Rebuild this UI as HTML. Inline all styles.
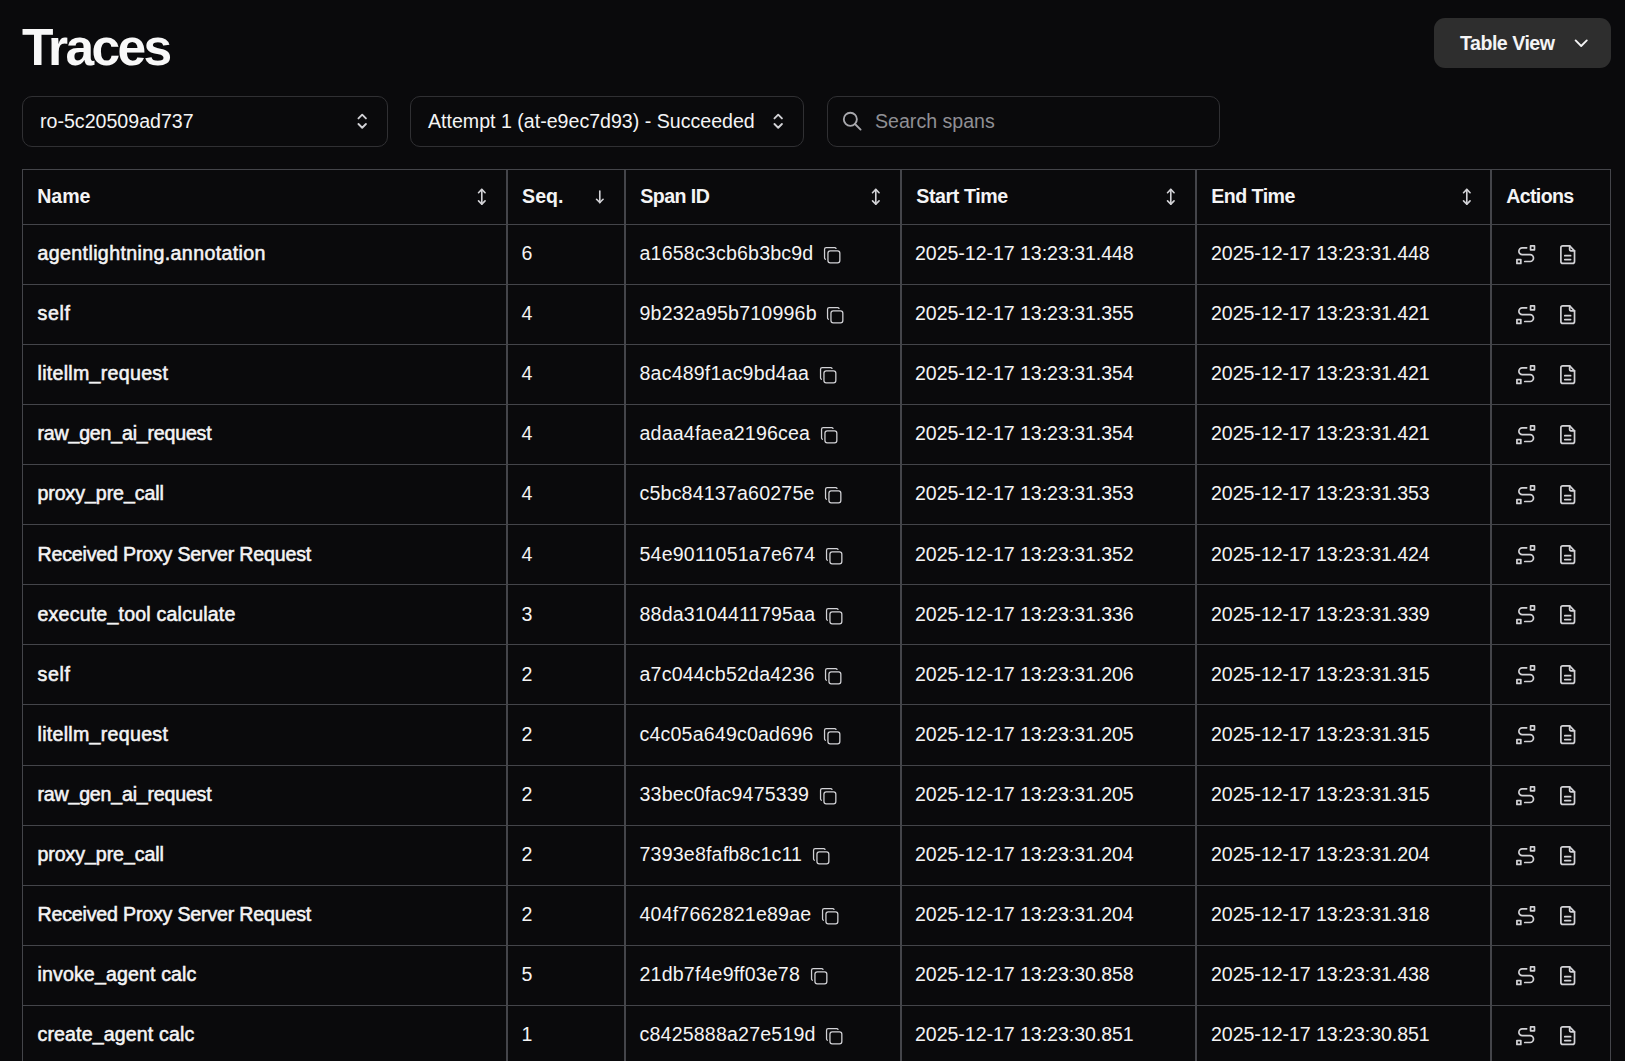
<!DOCTYPE html>
<html><head><meta charset="utf-8"><title>Traces</title>
<style>
html,body{margin:0;padding:0;}
body{width:1625px;height:1061px;overflow:hidden;background:#0a0a0c;position:relative;font-family:"Liberation Sans",sans-serif;color:#f4f4f5;}
.t{position:absolute;white-space:nowrap;font-size:19.6px;line-height:20px;}
.b{font-weight:700;}
.us{position:relative;top:-1.5px;}
.m{-webkit-text-stroke:0.55px #f4f4f5;}
.ic{position:absolute;width:22.4px;height:22.4px;}
.cp{position:absolute;width:20.4px;height:20.4px;}
.box{position:absolute;box-sizing:border-box;border:1px solid #303033;border-radius:10px;}
.hl{position:absolute;height:1px;background:#44454a;}
.vl{position:absolute;width:1px;background:#44454a;}
</style></head><body>

<div class="t b" style="left:22px;top:19px;font-size:51.5px;line-height:56px;letter-spacing:-2.6px;color:#f8f8f8">Traces</div>
<div style="position:absolute;left:1434px;top:18px;width:177px;height:50px;border-radius:11px;background:#2e2e2e"></div>
<div class="t b" style="left:1460px;top:33px;letter-spacing:-0.5px">Table View</div>
<svg class="ic" style="left:1570px;top:32px" viewBox="0 0 24 24" fill="none" stroke="#f4f4f5" stroke-width="2" stroke-linecap="round" stroke-linejoin="round"><path d="M6 9l6 6l6-6"/></svg>
<div class="box" style="left:22px;top:96px;width:366px;height:51px"></div>
<div class="t" style="left:40px;top:111px">ro-5c20509ad737</div>
<svg class="ic" style="left:351.4px;top:110.3px" viewBox="0 0 24 24" fill="none" stroke="#d2d2d6" stroke-width="2" stroke-linecap="round" stroke-linejoin="round"><path d="M8 9l4-4l4 4"/><path d="M16 15l-4 4l-4-4"/></svg>
<div class="box" style="left:410px;top:96px;width:394px;height:51px"></div>
<div class="t" style="left:428px;top:111px">Attempt 1 (at-e9ec7d93) - Succeeded</div>
<svg class="ic" style="left:767.4px;top:110.3px" viewBox="0 0 24 24" fill="none" stroke="#d2d2d6" stroke-width="2" stroke-linecap="round" stroke-linejoin="round"><path d="M8 9l4-4l4 4"/><path d="M16 15l-4 4l-4-4"/></svg>
<div class="box" style="left:827px;top:96px;width:393px;height:51px"></div>
<svg class="ic" style="left:841.2px;top:110.4px" viewBox="0 0 24 24" fill="none" stroke="#a8a8ad" stroke-width="2" stroke-linecap="round" stroke-linejoin="round"><path d="M3 10a7 7 0 1 0 14 0a7 7 0 1 0-14 0"/><path d="M21 21l-6-6"/></svg>
<div class="t" style="left:875px;top:111px;color:#8f8f94">Search spans</div>
<div class="hl" style="left:22px;width:1589px;top:169px"></div>
<div class="hl" style="left:22px;width:1589px;top:224px"></div>
<div class="hl" style="left:22px;width:1589px;top:284px"></div>
<div class="hl" style="left:22px;width:1589px;top:344px"></div>
<div class="hl" style="left:22px;width:1589px;top:404px"></div>
<div class="hl" style="left:22px;width:1589px;top:464px"></div>
<div class="hl" style="left:22px;width:1589px;top:524px"></div>
<div class="hl" style="left:22px;width:1589px;top:584px"></div>
<div class="hl" style="left:22px;width:1589px;top:644px"></div>
<div class="hl" style="left:22px;width:1589px;top:704px"></div>
<div class="hl" style="left:22px;width:1589px;top:765px"></div>
<div class="hl" style="left:22px;width:1589px;top:825px"></div>
<div class="hl" style="left:22px;width:1589px;top:885px"></div>
<div class="hl" style="left:22px;width:1589px;top:945px"></div>
<div class="hl" style="left:22px;width:1589px;top:1005px"></div>
<div class="vl" style="left:22px;top:169px;height:892px"></div>
<div class="vl" style="left:1610px;top:169px;height:892px"></div>
<div class="vl" style="left:506px;top:169px;height:892px;width:2px"></div>
<div class="vl" style="left:624px;top:169px;height:892px;width:2px"></div>
<div class="vl" style="left:900px;top:169px;height:892px;width:2px"></div>
<div class="vl" style="left:1195px;top:169px;height:892px;width:2px"></div>
<div class="vl" style="left:1490px;top:169px;height:892px;width:2px"></div>
<div class="t b" style="left:37.3px;top:186px;letter-spacing:-0.10px">Name</div>
<div class="t b" style="left:522.1px;top:186px;letter-spacing:0.00px">Seq.</div>
<div class="t b" style="left:640.3px;top:186px;letter-spacing:-0.57px">Span ID</div>
<div class="t b" style="left:916.3px;top:186px;letter-spacing:-0.40px">Start Time</div>
<div class="t b" style="left:1211.3px;top:186px;letter-spacing:-0.54px">End Time</div>
<div class="t b" style="left:1506.3px;top:186px;letter-spacing:-0.67px">Actions</div>
<svg class="ic" style="left:472.2px;top:187.1px;width:19.6px;height:19.6px" viewBox="0 0 24 24" fill="none" stroke="#d2d2d6" stroke-width="2" stroke-linecap="round" stroke-linejoin="round"><path d="M8 7l4-4l4 4"/><path d="M8 17l4 4l4-4"/><path d="M12 3v18"/></svg>
<svg class="ic" style="left:589.9px;top:187.1px;width:19.6px;height:19.6px" viewBox="0 0 24 24" fill="none" stroke="#d2d2d6" stroke-width="2" stroke-linecap="round" stroke-linejoin="round"><path d="M12 5v14"/><path d="M16 15l-4 4"/><path d="M8 15l4 4"/></svg>
<svg class="ic" style="left:866.2px;top:187.1px;width:19.6px;height:19.6px" viewBox="0 0 24 24" fill="none" stroke="#d2d2d6" stroke-width="2" stroke-linecap="round" stroke-linejoin="round"><path d="M8 7l4-4l4 4"/><path d="M8 17l4 4l4-4"/><path d="M12 3v18"/></svg>
<svg class="ic" style="left:1161.2px;top:187.1px;width:19.6px;height:19.6px" viewBox="0 0 24 24" fill="none" stroke="#d2d2d6" stroke-width="2" stroke-linecap="round" stroke-linejoin="round"><path d="M8 7l4-4l4 4"/><path d="M8 17l4 4l4-4"/><path d="M12 3v18"/></svg>
<svg class="ic" style="left:1457.2px;top:187.1px;width:19.6px;height:19.6px" viewBox="0 0 24 24" fill="none" stroke="#d2d2d6" stroke-width="2" stroke-linecap="round" stroke-linejoin="round"><path d="M8 7l4-4l4 4"/><path d="M8 17l4 4l4-4"/><path d="M12 3v18"/></svg>
<div class="t m" style="left:37.5px;top:243px;letter-spacing:0.375px">agentlightning.annotation</div>
<div class="t" style="left:521.5px;top:243px">6</div>
<div class="t" style="left:639.5px;top:243px;display:flex;align-items:center"><span style="letter-spacing:0.18px">a1658c3cb6b3bc9d</span><span style="position:relative;display:inline-block;width:20.4px;height:20.4px;margin-left:8.5px;top:2px"><svg class="cp" style="left:0;top:0" viewBox="0 0 24 24" fill="none" stroke="#d2d2d6" stroke-width="1.5" stroke-linecap="round" stroke-linejoin="round"><path d="M7 9.667A2.667 2.667 0 0 1 9.667 7h8.666A2.667 2.667 0 0 1 21 9.667v8.666A2.667 2.667 0 0 1 18.333 21h-8.666A2.667 2.667 0 0 1 7 18.333z"/><path d="M4.012 16.737A2.005 2.005 0 0 1 3 15V5c0-1.1.9-2 2-2h10c.75 0 1.158.385 1.5 1"/></svg></span></div>
<div class="t" style="left:915px;top:243px;letter-spacing:-0.06px">2025-12-17 13:23:31.448</div>
<div class="t" style="left:1211px;top:243px;letter-spacing:-0.06px">2025-12-17 13:23:31.448</div>
<svg class="ic" style="left:1514.2px;top:242.9px;width:23.4px;height:23.4px" viewBox="0 0 24 24" fill="none" stroke="#d2d2d6" stroke-width="1.75" stroke-linecap="round" stroke-linejoin="round"><path d="M3 17h4v4h-4z"/><path d="M17 3h4v4h-4z"/><path d="M11 19h5.5a3.5 3.5 0 0 0 0-7h-8a3.5 3.5 0 0 1 0-7h4.5"/></svg>
<svg class="ic" style="left:1556.3px;top:242.9px;width:23.4px;height:23.4px" viewBox="0 0 24 24" fill="none" stroke="#d2d2d6" stroke-width="1.75" stroke-linecap="round" stroke-linejoin="round"><path d="M14 3v4a1 1 0 0 0 1 1h4"/><path d="M17 21h-10a2 2 0 0 1-2-2v-14a2 2 0 0 1 2-2h7l5 5v11a2 2 0 0 1-2 2z"/><path d="M9 17h6"/><path d="M9 13h6"/></svg>
<div class="t m" style="left:37.5px;top:303px;letter-spacing:0.667px">self</div>
<div class="t" style="left:521.5px;top:303px">4</div>
<div class="t" style="left:639.5px;top:303px;display:flex;align-items:center"><span style="letter-spacing:0.18px">9b232a95b710996b</span><span style="position:relative;display:inline-block;width:20.4px;height:20.4px;margin-left:8.5px;top:2px"><svg class="cp" style="left:0;top:0" viewBox="0 0 24 24" fill="none" stroke="#d2d2d6" stroke-width="1.5" stroke-linecap="round" stroke-linejoin="round"><path d="M7 9.667A2.667 2.667 0 0 1 9.667 7h8.666A2.667 2.667 0 0 1 21 9.667v8.666A2.667 2.667 0 0 1 18.333 21h-8.666A2.667 2.667 0 0 1 7 18.333z"/><path d="M4.012 16.737A2.005 2.005 0 0 1 3 15V5c0-1.1.9-2 2-2h10c.75 0 1.158.385 1.5 1"/></svg></span></div>
<div class="t" style="left:915px;top:303px;letter-spacing:-0.06px">2025-12-17 13:23:31.355</div>
<div class="t" style="left:1211px;top:303px;letter-spacing:-0.06px">2025-12-17 13:23:31.421</div>
<svg class="ic" style="left:1514.2px;top:303.0px;width:23.4px;height:23.4px" viewBox="0 0 24 24" fill="none" stroke="#d2d2d6" stroke-width="1.75" stroke-linecap="round" stroke-linejoin="round"><path d="M3 17h4v4h-4z"/><path d="M17 3h4v4h-4z"/><path d="M11 19h5.5a3.5 3.5 0 0 0 0-7h-8a3.5 3.5 0 0 1 0-7h4.5"/></svg>
<svg class="ic" style="left:1556.3px;top:303.0px;width:23.4px;height:23.4px" viewBox="0 0 24 24" fill="none" stroke="#d2d2d6" stroke-width="1.75" stroke-linecap="round" stroke-linejoin="round"><path d="M14 3v4a1 1 0 0 0 1 1h4"/><path d="M17 21h-10a2 2 0 0 1-2-2v-14a2 2 0 0 1 2-2h7l5 5v11a2 2 0 0 1-2 2z"/><path d="M9 17h6"/><path d="M9 13h6"/></svg>
<div class="t m" style="left:37.5px;top:363px;letter-spacing:0.286px">litellm<span class="us">_</span>request</div>
<div class="t" style="left:521.5px;top:363px">4</div>
<div class="t" style="left:639.5px;top:363px;display:flex;align-items:center"><span style="letter-spacing:0.18px">8ac489f1ac9bd4aa</span><span style="position:relative;display:inline-block;width:20.4px;height:20.4px;margin-left:8.5px;top:2px"><svg class="cp" style="left:0;top:0" viewBox="0 0 24 24" fill="none" stroke="#d2d2d6" stroke-width="1.5" stroke-linecap="round" stroke-linejoin="round"><path d="M7 9.667A2.667 2.667 0 0 1 9.667 7h8.666A2.667 2.667 0 0 1 21 9.667v8.666A2.667 2.667 0 0 1 18.333 21h-8.666A2.667 2.667 0 0 1 7 18.333z"/><path d="M4.012 16.737A2.005 2.005 0 0 1 3 15V5c0-1.1.9-2 2-2h10c.75 0 1.158.385 1.5 1"/></svg></span></div>
<div class="t" style="left:915px;top:363px;letter-spacing:-0.06px">2025-12-17 13:23:31.354</div>
<div class="t" style="left:1211px;top:363px;letter-spacing:-0.06px">2025-12-17 13:23:31.421</div>
<svg class="ic" style="left:1514.2px;top:363.1px;width:23.4px;height:23.4px" viewBox="0 0 24 24" fill="none" stroke="#d2d2d6" stroke-width="1.75" stroke-linecap="round" stroke-linejoin="round"><path d="M3 17h4v4h-4z"/><path d="M17 3h4v4h-4z"/><path d="M11 19h5.5a3.5 3.5 0 0 0 0-7h-8a3.5 3.5 0 0 1 0-7h4.5"/></svg>
<svg class="ic" style="left:1556.3px;top:363.1px;width:23.4px;height:23.4px" viewBox="0 0 24 24" fill="none" stroke="#d2d2d6" stroke-width="1.75" stroke-linecap="round" stroke-linejoin="round"><path d="M14 3v4a1 1 0 0 0 1 1h4"/><path d="M17 21h-10a2 2 0 0 1-2-2v-14a2 2 0 0 1 2-2h7l5 5v11a2 2 0 0 1-2 2z"/><path d="M9 17h6"/><path d="M9 13h6"/></svg>
<div class="t m" style="left:37.5px;top:423px;letter-spacing:-0.206px">raw<span class="us">_</span>gen<span class="us">_</span>ai<span class="us">_</span>request</div>
<div class="t" style="left:521.5px;top:423px">4</div>
<div class="t" style="left:639.5px;top:423px;display:flex;align-items:center"><span style="letter-spacing:0.18px">adaa4faea2196cea</span><span style="position:relative;display:inline-block;width:20.4px;height:20.4px;margin-left:8.5px;top:2px"><svg class="cp" style="left:0;top:0" viewBox="0 0 24 24" fill="none" stroke="#d2d2d6" stroke-width="1.5" stroke-linecap="round" stroke-linejoin="round"><path d="M7 9.667A2.667 2.667 0 0 1 9.667 7h8.666A2.667 2.667 0 0 1 21 9.667v8.666A2.667 2.667 0 0 1 18.333 21h-8.666A2.667 2.667 0 0 1 7 18.333z"/><path d="M4.012 16.737A2.005 2.005 0 0 1 3 15V5c0-1.1.9-2 2-2h10c.75 0 1.158.385 1.5 1"/></svg></span></div>
<div class="t" style="left:915px;top:423px;letter-spacing:-0.06px">2025-12-17 13:23:31.354</div>
<div class="t" style="left:1211px;top:423px;letter-spacing:-0.06px">2025-12-17 13:23:31.421</div>
<svg class="ic" style="left:1514.2px;top:423.1px;width:23.4px;height:23.4px" viewBox="0 0 24 24" fill="none" stroke="#d2d2d6" stroke-width="1.75" stroke-linecap="round" stroke-linejoin="round"><path d="M3 17h4v4h-4z"/><path d="M17 3h4v4h-4z"/><path d="M11 19h5.5a3.5 3.5 0 0 0 0-7h-8a3.5 3.5 0 0 1 0-7h4.5"/></svg>
<svg class="ic" style="left:1556.3px;top:423.1px;width:23.4px;height:23.4px" viewBox="0 0 24 24" fill="none" stroke="#d2d2d6" stroke-width="1.75" stroke-linecap="round" stroke-linejoin="round"><path d="M14 3v4a1 1 0 0 0 1 1h4"/><path d="M17 21h-10a2 2 0 0 1-2-2v-14a2 2 0 0 1 2-2h7l5 5v11a2 2 0 0 1-2 2z"/><path d="M9 17h6"/><path d="M9 13h6"/></svg>
<div class="t m" style="left:37.5px;top:483px;letter-spacing:-0.080px">proxy<span class="us">_</span>pre<span class="us">_</span>call</div>
<div class="t" style="left:521.5px;top:483px">4</div>
<div class="t" style="left:639.5px;top:483px;display:flex;align-items:center"><span style="letter-spacing:0.18px">c5bc84137a60275e</span><span style="position:relative;display:inline-block;width:20.4px;height:20.4px;margin-left:8.5px;top:2px"><svg class="cp" style="left:0;top:0" viewBox="0 0 24 24" fill="none" stroke="#d2d2d6" stroke-width="1.5" stroke-linecap="round" stroke-linejoin="round"><path d="M7 9.667A2.667 2.667 0 0 1 9.667 7h8.666A2.667 2.667 0 0 1 21 9.667v8.666A2.667 2.667 0 0 1 18.333 21h-8.666A2.667 2.667 0 0 1 7 18.333z"/><path d="M4.012 16.737A2.005 2.005 0 0 1 3 15V5c0-1.1.9-2 2-2h10c.75 0 1.158.385 1.5 1"/></svg></span></div>
<div class="t" style="left:915px;top:483px;letter-spacing:-0.06px">2025-12-17 13:23:31.353</div>
<div class="t" style="left:1211px;top:483px;letter-spacing:-0.06px">2025-12-17 13:23:31.353</div>
<svg class="ic" style="left:1514.2px;top:483.2px;width:23.4px;height:23.4px" viewBox="0 0 24 24" fill="none" stroke="#d2d2d6" stroke-width="1.75" stroke-linecap="round" stroke-linejoin="round"><path d="M3 17h4v4h-4z"/><path d="M17 3h4v4h-4z"/><path d="M11 19h5.5a3.5 3.5 0 0 0 0-7h-8a3.5 3.5 0 0 1 0-7h4.5"/></svg>
<svg class="ic" style="left:1556.3px;top:483.2px;width:23.4px;height:23.4px" viewBox="0 0 24 24" fill="none" stroke="#d2d2d6" stroke-width="1.75" stroke-linecap="round" stroke-linejoin="round"><path d="M14 3v4a1 1 0 0 0 1 1h4"/><path d="M17 21h-10a2 2 0 0 1-2-2v-14a2 2 0 0 1 2-2h7l5 5v11a2 2 0 0 1-2 2z"/><path d="M9 17h6"/><path d="M9 13h6"/></svg>
<div class="t m" style="left:37.5px;top:544px;letter-spacing:-0.179px">Received Proxy Server Request</div>
<div class="t" style="left:521.5px;top:544px">4</div>
<div class="t" style="left:639.5px;top:544px;display:flex;align-items:center"><span style="letter-spacing:0.18px">54e9011051a7e674</span><span style="position:relative;display:inline-block;width:20.4px;height:20.4px;margin-left:8.5px;top:2px"><svg class="cp" style="left:0;top:0" viewBox="0 0 24 24" fill="none" stroke="#d2d2d6" stroke-width="1.5" stroke-linecap="round" stroke-linejoin="round"><path d="M7 9.667A2.667 2.667 0 0 1 9.667 7h8.666A2.667 2.667 0 0 1 21 9.667v8.666A2.667 2.667 0 0 1 18.333 21h-8.666A2.667 2.667 0 0 1 7 18.333z"/><path d="M4.012 16.737A2.005 2.005 0 0 1 3 15V5c0-1.1.9-2 2-2h10c.75 0 1.158.385 1.5 1"/></svg></span></div>
<div class="t" style="left:915px;top:544px;letter-spacing:-0.06px">2025-12-17 13:23:31.352</div>
<div class="t" style="left:1211px;top:544px;letter-spacing:-0.06px">2025-12-17 13:23:31.424</div>
<svg class="ic" style="left:1514.2px;top:543.2px;width:23.4px;height:23.4px" viewBox="0 0 24 24" fill="none" stroke="#d2d2d6" stroke-width="1.75" stroke-linecap="round" stroke-linejoin="round"><path d="M3 17h4v4h-4z"/><path d="M17 3h4v4h-4z"/><path d="M11 19h5.5a3.5 3.5 0 0 0 0-7h-8a3.5 3.5 0 0 1 0-7h4.5"/></svg>
<svg class="ic" style="left:1556.3px;top:543.2px;width:23.4px;height:23.4px" viewBox="0 0 24 24" fill="none" stroke="#d2d2d6" stroke-width="1.75" stroke-linecap="round" stroke-linejoin="round"><path d="M14 3v4a1 1 0 0 0 1 1h4"/><path d="M17 21h-10a2 2 0 0 1-2-2v-14a2 2 0 0 1 2-2h7l5 5v11a2 2 0 0 1-2 2z"/><path d="M9 17h6"/><path d="M9 13h6"/></svg>
<div class="t m" style="left:37.5px;top:604px;letter-spacing:0.190px">execute<span class="us">_</span>tool calculate</div>
<div class="t" style="left:521.5px;top:604px">3</div>
<div class="t" style="left:639.5px;top:604px;display:flex;align-items:center"><span style="letter-spacing:0.18px">88da3104411795aa</span><span style="position:relative;display:inline-block;width:20.4px;height:20.4px;margin-left:8.5px;top:2px"><svg class="cp" style="left:0;top:0" viewBox="0 0 24 24" fill="none" stroke="#d2d2d6" stroke-width="1.5" stroke-linecap="round" stroke-linejoin="round"><path d="M7 9.667A2.667 2.667 0 0 1 9.667 7h8.666A2.667 2.667 0 0 1 21 9.667v8.666A2.667 2.667 0 0 1 18.333 21h-8.666A2.667 2.667 0 0 1 7 18.333z"/><path d="M4.012 16.737A2.005 2.005 0 0 1 3 15V5c0-1.1.9-2 2-2h10c.75 0 1.158.385 1.5 1"/></svg></span></div>
<div class="t" style="left:915px;top:604px;letter-spacing:-0.06px">2025-12-17 13:23:31.336</div>
<div class="t" style="left:1211px;top:604px;letter-spacing:-0.06px">2025-12-17 13:23:31.339</div>
<svg class="ic" style="left:1514.2px;top:603.3px;width:23.4px;height:23.4px" viewBox="0 0 24 24" fill="none" stroke="#d2d2d6" stroke-width="1.75" stroke-linecap="round" stroke-linejoin="round"><path d="M3 17h4v4h-4z"/><path d="M17 3h4v4h-4z"/><path d="M11 19h5.5a3.5 3.5 0 0 0 0-7h-8a3.5 3.5 0 0 1 0-7h4.5"/></svg>
<svg class="ic" style="left:1556.3px;top:603.3px;width:23.4px;height:23.4px" viewBox="0 0 24 24" fill="none" stroke="#d2d2d6" stroke-width="1.75" stroke-linecap="round" stroke-linejoin="round"><path d="M14 3v4a1 1 0 0 0 1 1h4"/><path d="M17 21h-10a2 2 0 0 1-2-2v-14a2 2 0 0 1 2-2h7l5 5v11a2 2 0 0 1-2 2z"/><path d="M9 17h6"/><path d="M9 13h6"/></svg>
<div class="t m" style="left:37.5px;top:664px;letter-spacing:0.667px">self</div>
<div class="t" style="left:521.5px;top:664px">2</div>
<div class="t" style="left:639.5px;top:664px;display:flex;align-items:center"><span style="letter-spacing:0.18px">a7c044cb52da4236</span><span style="position:relative;display:inline-block;width:20.4px;height:20.4px;margin-left:8.5px;top:2px"><svg class="cp" style="left:0;top:0" viewBox="0 0 24 24" fill="none" stroke="#d2d2d6" stroke-width="1.5" stroke-linecap="round" stroke-linejoin="round"><path d="M7 9.667A2.667 2.667 0 0 1 9.667 7h8.666A2.667 2.667 0 0 1 21 9.667v8.666A2.667 2.667 0 0 1 18.333 21h-8.666A2.667 2.667 0 0 1 7 18.333z"/><path d="M4.012 16.737A2.005 2.005 0 0 1 3 15V5c0-1.1.9-2 2-2h10c.75 0 1.158.385 1.5 1"/></svg></span></div>
<div class="t" style="left:915px;top:664px;letter-spacing:-0.06px">2025-12-17 13:23:31.206</div>
<div class="t" style="left:1211px;top:664px;letter-spacing:-0.06px">2025-12-17 13:23:31.315</div>
<svg class="ic" style="left:1514.2px;top:663.3px;width:23.4px;height:23.4px" viewBox="0 0 24 24" fill="none" stroke="#d2d2d6" stroke-width="1.75" stroke-linecap="round" stroke-linejoin="round"><path d="M3 17h4v4h-4z"/><path d="M17 3h4v4h-4z"/><path d="M11 19h5.5a3.5 3.5 0 0 0 0-7h-8a3.5 3.5 0 0 1 0-7h4.5"/></svg>
<svg class="ic" style="left:1556.3px;top:663.3px;width:23.4px;height:23.4px" viewBox="0 0 24 24" fill="none" stroke="#d2d2d6" stroke-width="1.75" stroke-linecap="round" stroke-linejoin="round"><path d="M14 3v4a1 1 0 0 0 1 1h4"/><path d="M17 21h-10a2 2 0 0 1-2-2v-14a2 2 0 0 1 2-2h7l5 5v11a2 2 0 0 1-2 2z"/><path d="M9 17h6"/><path d="M9 13h6"/></svg>
<div class="t m" style="left:37.5px;top:724px;letter-spacing:0.286px">litellm<span class="us">_</span>request</div>
<div class="t" style="left:521.5px;top:724px">2</div>
<div class="t" style="left:639.5px;top:724px;display:flex;align-items:center"><span style="letter-spacing:0.18px">c4c05a649c0ad696</span><span style="position:relative;display:inline-block;width:20.4px;height:20.4px;margin-left:8.5px;top:2px"><svg class="cp" style="left:0;top:0" viewBox="0 0 24 24" fill="none" stroke="#d2d2d6" stroke-width="1.5" stroke-linecap="round" stroke-linejoin="round"><path d="M7 9.667A2.667 2.667 0 0 1 9.667 7h8.666A2.667 2.667 0 0 1 21 9.667v8.666A2.667 2.667 0 0 1 18.333 21h-8.666A2.667 2.667 0 0 1 7 18.333z"/><path d="M4.012 16.737A2.005 2.005 0 0 1 3 15V5c0-1.1.9-2 2-2h10c.75 0 1.158.385 1.5 1"/></svg></span></div>
<div class="t" style="left:915px;top:724px;letter-spacing:-0.06px">2025-12-17 13:23:31.205</div>
<div class="t" style="left:1211px;top:724px;letter-spacing:-0.06px">2025-12-17 13:23:31.315</div>
<svg class="ic" style="left:1514.2px;top:723.4px;width:23.4px;height:23.4px" viewBox="0 0 24 24" fill="none" stroke="#d2d2d6" stroke-width="1.75" stroke-linecap="round" stroke-linejoin="round"><path d="M3 17h4v4h-4z"/><path d="M17 3h4v4h-4z"/><path d="M11 19h5.5a3.5 3.5 0 0 0 0-7h-8a3.5 3.5 0 0 1 0-7h4.5"/></svg>
<svg class="ic" style="left:1556.3px;top:723.4px;width:23.4px;height:23.4px" viewBox="0 0 24 24" fill="none" stroke="#d2d2d6" stroke-width="1.75" stroke-linecap="round" stroke-linejoin="round"><path d="M14 3v4a1 1 0 0 0 1 1h4"/><path d="M17 21h-10a2 2 0 0 1-2-2v-14a2 2 0 0 1 2-2h7l5 5v11a2 2 0 0 1-2 2z"/><path d="M9 17h6"/><path d="M9 13h6"/></svg>
<div class="t m" style="left:37.5px;top:784px;letter-spacing:-0.206px">raw<span class="us">_</span>gen<span class="us">_</span>ai<span class="us">_</span>request</div>
<div class="t" style="left:521.5px;top:784px">2</div>
<div class="t" style="left:639.5px;top:784px;display:flex;align-items:center"><span style="letter-spacing:0.18px">33bec0fac9475339</span><span style="position:relative;display:inline-block;width:20.4px;height:20.4px;margin-left:8.5px;top:2px"><svg class="cp" style="left:0;top:0" viewBox="0 0 24 24" fill="none" stroke="#d2d2d6" stroke-width="1.5" stroke-linecap="round" stroke-linejoin="round"><path d="M7 9.667A2.667 2.667 0 0 1 9.667 7h8.666A2.667 2.667 0 0 1 21 9.667v8.666A2.667 2.667 0 0 1 18.333 21h-8.666A2.667 2.667 0 0 1 7 18.333z"/><path d="M4.012 16.737A2.005 2.005 0 0 1 3 15V5c0-1.1.9-2 2-2h10c.75 0 1.158.385 1.5 1"/></svg></span></div>
<div class="t" style="left:915px;top:784px;letter-spacing:-0.06px">2025-12-17 13:23:31.205</div>
<div class="t" style="left:1211px;top:784px;letter-spacing:-0.06px">2025-12-17 13:23:31.315</div>
<svg class="ic" style="left:1514.2px;top:783.5px;width:23.4px;height:23.4px" viewBox="0 0 24 24" fill="none" stroke="#d2d2d6" stroke-width="1.75" stroke-linecap="round" stroke-linejoin="round"><path d="M3 17h4v4h-4z"/><path d="M17 3h4v4h-4z"/><path d="M11 19h5.5a3.5 3.5 0 0 0 0-7h-8a3.5 3.5 0 0 1 0-7h4.5"/></svg>
<svg class="ic" style="left:1556.3px;top:783.5px;width:23.4px;height:23.4px" viewBox="0 0 24 24" fill="none" stroke="#d2d2d6" stroke-width="1.75" stroke-linecap="round" stroke-linejoin="round"><path d="M14 3v4a1 1 0 0 0 1 1h4"/><path d="M17 21h-10a2 2 0 0 1-2-2v-14a2 2 0 0 1 2-2h7l5 5v11a2 2 0 0 1-2 2z"/><path d="M9 17h6"/><path d="M9 13h6"/></svg>
<div class="t m" style="left:37.5px;top:844px;letter-spacing:-0.080px">proxy<span class="us">_</span>pre<span class="us">_</span>call</div>
<div class="t" style="left:521.5px;top:844px">2</div>
<div class="t" style="left:639.5px;top:844px;display:flex;align-items:center"><span style="letter-spacing:0.18px">7393e8fafb8c1c11</span><span style="position:relative;display:inline-block;width:20.4px;height:20.4px;margin-left:8.5px;top:2px"><svg class="cp" style="left:0;top:0" viewBox="0 0 24 24" fill="none" stroke="#d2d2d6" stroke-width="1.5" stroke-linecap="round" stroke-linejoin="round"><path d="M7 9.667A2.667 2.667 0 0 1 9.667 7h8.666A2.667 2.667 0 0 1 21 9.667v8.666A2.667 2.667 0 0 1 18.333 21h-8.666A2.667 2.667 0 0 1 7 18.333z"/><path d="M4.012 16.737A2.005 2.005 0 0 1 3 15V5c0-1.1.9-2 2-2h10c.75 0 1.158.385 1.5 1"/></svg></span></div>
<div class="t" style="left:915px;top:844px;letter-spacing:-0.06px">2025-12-17 13:23:31.204</div>
<div class="t" style="left:1211px;top:844px;letter-spacing:-0.06px">2025-12-17 13:23:31.204</div>
<svg class="ic" style="left:1514.2px;top:843.5px;width:23.4px;height:23.4px" viewBox="0 0 24 24" fill="none" stroke="#d2d2d6" stroke-width="1.75" stroke-linecap="round" stroke-linejoin="round"><path d="M3 17h4v4h-4z"/><path d="M17 3h4v4h-4z"/><path d="M11 19h5.5a3.5 3.5 0 0 0 0-7h-8a3.5 3.5 0 0 1 0-7h4.5"/></svg>
<svg class="ic" style="left:1556.3px;top:843.5px;width:23.4px;height:23.4px" viewBox="0 0 24 24" fill="none" stroke="#d2d2d6" stroke-width="1.75" stroke-linecap="round" stroke-linejoin="round"><path d="M14 3v4a1 1 0 0 0 1 1h4"/><path d="M17 21h-10a2 2 0 0 1-2-2v-14a2 2 0 0 1 2-2h7l5 5v11a2 2 0 0 1-2 2z"/><path d="M9 17h6"/><path d="M9 13h6"/></svg>
<div class="t m" style="left:37.5px;top:904px;letter-spacing:-0.179px">Received Proxy Server Request</div>
<div class="t" style="left:521.5px;top:904px">2</div>
<div class="t" style="left:639.5px;top:904px;display:flex;align-items:center"><span style="letter-spacing:0.18px">404f7662821e89ae</span><span style="position:relative;display:inline-block;width:20.4px;height:20.4px;margin-left:8.5px;top:2px"><svg class="cp" style="left:0;top:0" viewBox="0 0 24 24" fill="none" stroke="#d2d2d6" stroke-width="1.5" stroke-linecap="round" stroke-linejoin="round"><path d="M7 9.667A2.667 2.667 0 0 1 9.667 7h8.666A2.667 2.667 0 0 1 21 9.667v8.666A2.667 2.667 0 0 1 18.333 21h-8.666A2.667 2.667 0 0 1 7 18.333z"/><path d="M4.012 16.737A2.005 2.005 0 0 1 3 15V5c0-1.1.9-2 2-2h10c.75 0 1.158.385 1.5 1"/></svg></span></div>
<div class="t" style="left:915px;top:904px;letter-spacing:-0.06px">2025-12-17 13:23:31.204</div>
<div class="t" style="left:1211px;top:904px;letter-spacing:-0.06px">2025-12-17 13:23:31.318</div>
<svg class="ic" style="left:1514.2px;top:903.6px;width:23.4px;height:23.4px" viewBox="0 0 24 24" fill="none" stroke="#d2d2d6" stroke-width="1.75" stroke-linecap="round" stroke-linejoin="round"><path d="M3 17h4v4h-4z"/><path d="M17 3h4v4h-4z"/><path d="M11 19h5.5a3.5 3.5 0 0 0 0-7h-8a3.5 3.5 0 0 1 0-7h4.5"/></svg>
<svg class="ic" style="left:1556.3px;top:903.6px;width:23.4px;height:23.4px" viewBox="0 0 24 24" fill="none" stroke="#d2d2d6" stroke-width="1.75" stroke-linecap="round" stroke-linejoin="round"><path d="M14 3v4a1 1 0 0 0 1 1h4"/><path d="M17 21h-10a2 2 0 0 1-2-2v-14a2 2 0 0 1 2-2h7l5 5v11a2 2 0 0 1-2 2z"/><path d="M9 17h6"/><path d="M9 13h6"/></svg>
<div class="t m" style="left:37.5px;top:964px;letter-spacing:0.125px">invoke<span class="us">_</span>agent calc</div>
<div class="t" style="left:521.5px;top:964px">5</div>
<div class="t" style="left:639.5px;top:964px;display:flex;align-items:center"><span style="letter-spacing:0.18px">21db7f4e9ff03e78</span><span style="position:relative;display:inline-block;width:20.4px;height:20.4px;margin-left:8.5px;top:2px"><svg class="cp" style="left:0;top:0" viewBox="0 0 24 24" fill="none" stroke="#d2d2d6" stroke-width="1.5" stroke-linecap="round" stroke-linejoin="round"><path d="M7 9.667A2.667 2.667 0 0 1 9.667 7h8.666A2.667 2.667 0 0 1 21 9.667v8.666A2.667 2.667 0 0 1 18.333 21h-8.666A2.667 2.667 0 0 1 7 18.333z"/><path d="M4.012 16.737A2.005 2.005 0 0 1 3 15V5c0-1.1.9-2 2-2h10c.75 0 1.158.385 1.5 1"/></svg></span></div>
<div class="t" style="left:915px;top:964px;letter-spacing:-0.06px">2025-12-17 13:23:30.858</div>
<div class="t" style="left:1211px;top:964px;letter-spacing:-0.06px">2025-12-17 13:23:31.438</div>
<svg class="ic" style="left:1514.2px;top:963.6px;width:23.4px;height:23.4px" viewBox="0 0 24 24" fill="none" stroke="#d2d2d6" stroke-width="1.75" stroke-linecap="round" stroke-linejoin="round"><path d="M3 17h4v4h-4z"/><path d="M17 3h4v4h-4z"/><path d="M11 19h5.5a3.5 3.5 0 0 0 0-7h-8a3.5 3.5 0 0 1 0-7h4.5"/></svg>
<svg class="ic" style="left:1556.3px;top:963.6px;width:23.4px;height:23.4px" viewBox="0 0 24 24" fill="none" stroke="#d2d2d6" stroke-width="1.75" stroke-linecap="round" stroke-linejoin="round"><path d="M14 3v4a1 1 0 0 0 1 1h4"/><path d="M17 21h-10a2 2 0 0 1-2-2v-14a2 2 0 0 1 2-2h7l5 5v11a2 2 0 0 1-2 2z"/><path d="M9 17h6"/><path d="M9 13h6"/></svg>
<div class="t m" style="left:37.5px;top:1024px;letter-spacing:0.125px">create<span class="us">_</span>agent calc</div>
<div class="t" style="left:521.5px;top:1024px">1</div>
<div class="t" style="left:639.5px;top:1024px;display:flex;align-items:center"><span style="letter-spacing:0.18px">c8425888a27e519d</span><span style="position:relative;display:inline-block;width:20.4px;height:20.4px;margin-left:8.5px;top:2px"><svg class="cp" style="left:0;top:0" viewBox="0 0 24 24" fill="none" stroke="#d2d2d6" stroke-width="1.5" stroke-linecap="round" stroke-linejoin="round"><path d="M7 9.667A2.667 2.667 0 0 1 9.667 7h8.666A2.667 2.667 0 0 1 21 9.667v8.666A2.667 2.667 0 0 1 18.333 21h-8.666A2.667 2.667 0 0 1 7 18.333z"/><path d="M4.012 16.737A2.005 2.005 0 0 1 3 15V5c0-1.1.9-2 2-2h10c.75 0 1.158.385 1.5 1"/></svg></span></div>
<div class="t" style="left:915px;top:1024px;letter-spacing:-0.06px">2025-12-17 13:23:30.851</div>
<div class="t" style="left:1211px;top:1024px;letter-spacing:-0.06px">2025-12-17 13:23:30.851</div>
<svg class="ic" style="left:1514.2px;top:1023.7px;width:23.4px;height:23.4px" viewBox="0 0 24 24" fill="none" stroke="#d2d2d6" stroke-width="1.75" stroke-linecap="round" stroke-linejoin="round"><path d="M3 17h4v4h-4z"/><path d="M17 3h4v4h-4z"/><path d="M11 19h5.5a3.5 3.5 0 0 0 0-7h-8a3.5 3.5 0 0 1 0-7h4.5"/></svg>
<svg class="ic" style="left:1556.3px;top:1023.7px;width:23.4px;height:23.4px" viewBox="0 0 24 24" fill="none" stroke="#d2d2d6" stroke-width="1.75" stroke-linecap="round" stroke-linejoin="round"><path d="M14 3v4a1 1 0 0 0 1 1h4"/><path d="M17 21h-10a2 2 0 0 1-2-2v-14a2 2 0 0 1 2-2h7l5 5v11a2 2 0 0 1-2 2z"/><path d="M9 17h6"/><path d="M9 13h6"/></svg>
</body></html>
